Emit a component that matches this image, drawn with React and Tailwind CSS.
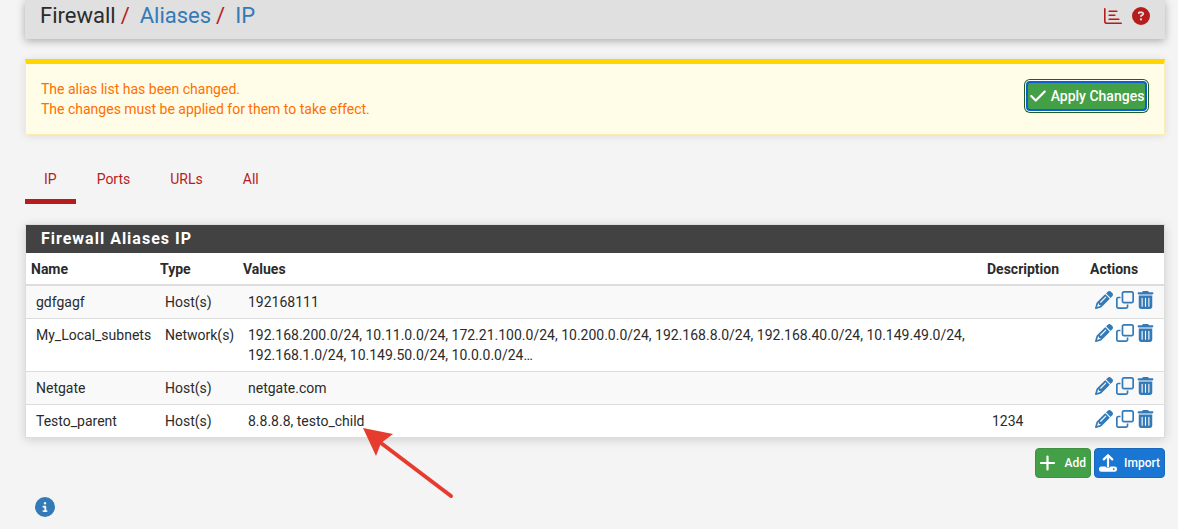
import React from 'react';
import {
  FaCheck,
  FaCircleInfo,
  FaCircleQuestion,
  FaPencil,
  FaRegClone,
  FaTrashCan,
} from 'react-icons/fa6';

const tabs = ['IP', 'Ports', 'URLs', 'All'];

const aliases = [
  { name: 'gdfgagf', type: 'Host(s)', values: '192168111', description: '' },
  {
    name: 'My_Local_subnets',
    type: 'Network(s)',
    values:
      '192.168.200.0/24, 10.11.0.0/24, 172.21.100.0/24, 10.200.0.0/24, 192.168.8.0/24, 192.168.40.0/24, 10.149.49.0/24, 192.168.1.0/24, 10.149.50.0/24, 10.0.0.0/24…',
    description: '',
  },
  { name: 'Netgate', type: 'Host(s)', values: 'netgate.com', description: '' },
  { name: 'Testo_parent', type: 'Host(s)', values: '8.8.8.8, testo_child', description: '1234', marked: true },
];

const ChartIcon = () => (
  <svg viewBox="0 0 18 16" className="h-4 w-[18px]" fill="none" stroke="currentColor" strokeLinecap="round">
    <path d="M.8.8v12.4q0 2 2 2H17.2" strokeWidth="1.6" />
    <path d="M5.2 3.3h7.6M5.2 7.2h5.6M5.2 11.2h9.6" strokeWidth="1.6" />
  </svg>
);

const PlusIcon = () => (
  <svg viewBox="0 0 16 16" className="size-4" fill="none" stroke="currentColor" strokeWidth="2.2" strokeLinecap="round">
    <path d="M7.5 1.5v13M1 8h13" />
  </svg>
);

const UploadIcon = () => (
  <svg viewBox="0 0 18 18" className="size-[18px]" fill="none">
    <path d="M9 12.5V1.6M4.8 5.4 9 1.2 13.2 5.4" stroke="currentColor" strokeWidth="2.2" strokeLinecap="round" strokeLinejoin="round" />
    <path
      fillRule="evenodd"
      fill="currentColor"
      d="M2.4 12.4h4a2.8 2.2 0 0 0 5.2 0h4a2.4 2.4 0 0 1 2.4 2.4v.6a2.4 2.4 0 0 1-2.4 2.4H2.4A2.4 2.4 0 0 1 0 15.400v-.6A2.4 2.400 0 0 1 2.400 12.4Zm12.300 1.8a.9.9 0 1 0 0 1.8.9.9 0 0 0 0-1.8Z"
    />
  </svg>
);

// Red pointer drawn over the page, its tip just left of the svg's corner
const Pointer = () => (
  <svg viewBox="2 0 90 70" className="pointer-events-none absolute top-full left-full z-10 h-[70px] w-[90px] overflow-visible text-[#e63c2f]">
    <path d="M18 14 88 67" stroke="currentColor" strokeWidth="4" strokeLinecap="round" />
    <path d="M0-1 30 5 18 14 13 27Z" fill="currentColor" />
  </svg>
);

const Breadcrumb = () => (
  <header className="flex h-[39px] items-start justify-between bg-[#e0e0e0] px-[15px] shadow-[0_2px_8px_rgba(0,0,0,0.3)]">
    <nav className="flex text-[22px] leading-8">
      <span>Firewall</span>
      <span className="pr-2.5 pl-[5px] text-[#b71c1c]">/</span>
      <a href="#aliases" className="text-[#337ab7]">Aliases</a>
      <span className="pr-2.5 pl-[5px] text-[#b71c1c]">/</span>
      <a href="#ip" className="text-[#337ab7]">IP</a>
    </nav>
    <div className="flex h-[31px] items-center gap-2.5 text-[#b71c1c]">
      <a href="#status" aria-label="Status"><ChartIcon /></a>
      <a href="#help" aria-label="Help"><FaCircleQuestion className="size-[18px]" /></a>
    </div>
  </header>
);

const ChangeAlert = () => (
  <div className="mt-5 flex items-start justify-between border border-t-[5px] border-[#ffecb3] border-t-[#ffd600] bg-[#fffde7] py-[15px] pr-[17px] pl-[15px] shadow-[0_1px_8px_rgba(0,0,0,0.1)]">
    <p className="text-[#ff6f00]">
      The alias list has been changed.
      <br />
      The changes must be applied for them to take effect.
    </p>
    <button
      type="button"
      className="mt-0.5 flex h-[30px] w-[121px] shrink-0 items-center justify-center gap-1 rounded-sm border-2 border-[#0b5fce] bg-[#43a047] font-medium whitespace-nowrap text-white shadow-[0_0_0_1px_#fff,0_0_0_2px_#1b5e20]"
    >
      <FaCheck className="size-[18px] shrink-0" />
      Apply Changes
    </button>
  </div>
);

const AliasRow = ({ alias }) => (
  <tr className="border-t border-[#ddd] align-top odd:bg-[#f9f9f9] even:bg-white first:border-t-2">
    <td className="px-2.5 py-1.5">{alias.name}</td>
    <td className="px-2.5 py-1.5">{alias.type}</td>
    <td className="px-2.5 py-1.5">
      <span className="relative">
        {alias.values}
        {alias.marked && <Pointer />}
      </span>
    </td>
    <td className="px-2.5 py-1.5">{alias.description}</td>
    <td className="py-[5px] pl-2.5">
      <div className="flex gap-[3px] text-[#337ab7]">
        <a href="#edit" aria-label={`Edit ${alias.name}`}><FaPencil className="size-[18px]" /></a>
        <a href="#copy" aria-label={`Copy ${alias.name}`}><FaRegClone className="size-[18px]" /></a>
        <a href="#delete" aria-label={`Delete ${alias.name}`}><FaTrashCan className="h-[18px] w-[17px]" /></a>
      </div>
    </td>
  </tr>
);

const AliasPanel = () => (
  <section className="mt-5 border border-[#ddd] bg-white shadow-[0_2px_10px_rgba(0,0,0,0.15)]">
    <h2 className="bg-[#424242] px-[15px] text-base leading-7 font-bold tracking-[1px] text-white">Firewall Aliases IP</h2>
    <table className="w-full table-fixed border-collapse">
      <colgroup>
        <col className="w-[129px]" />
        <col className="w-[83px]" />
        <col />
        <col className="w-[103px]" />
        <col className="w-[79px]" />
      </colgroup>
      <thead>
        <tr className="text-left">
          {['Name', 'Type', 'Values', 'Description', 'Actions'].map((label) => (
            <th key={label} className="px-[5px] pt-1.5 pb-[5px] font-bold">{label}</th>
          ))}
        </tr>
      </thead>
      <tbody>
        {aliases.map((alias) => <AliasRow key={alias.name} alias={alias} />)}
      </tbody>
    </table>
  </section>
);

export default function App() {
  return (
    <div className="min-h-screen bg-[#f4f4f4] pr-[13px] pl-[25px] font-['Roboto',sans-serif] text-sm leading-5 text-[#2b2b2b]">
      <Breadcrumb />
      <ChangeAlert />

      <nav className="mt-6 flex gap-0.5">
        {tabs.map((tab, i) => (
          <a
            key={tab}
            href={`#${tab}`}
            className={`border-b-[5px] px-[19px] py-2.5 text-[#b71c1c] ${i === 0 ? 'border-[#b71c1c]' : 'border-transparent'}`}
          >
            {tab}
          </a>
        ))}
      </nav>

      <AliasPanel />

      <div className="mt-2.5 flex justify-end gap-[3px] text-xs font-medium text-white">
        <button type="button" className="flex h-[30px] w-14 items-center justify-between rounded-sm border border-[#3d9141] bg-[#43a047] px-1">
          <PlusIcon />
          Add
        </button>
        <button type="button" className="flex h-[30px] w-[71px] items-center justify-between rounded-sm border border-[#1669bd] bg-[#1976d2] px-1">
          <UploadIcon />
          Import
        </button>
      </div>

      <button type="button" aria-label="Info" className="mt-[19px] ml-2.5 block text-[#337ab7]">
        <FaCircleInfo className="size-5" />
      </button>
    </div>
  );
}
